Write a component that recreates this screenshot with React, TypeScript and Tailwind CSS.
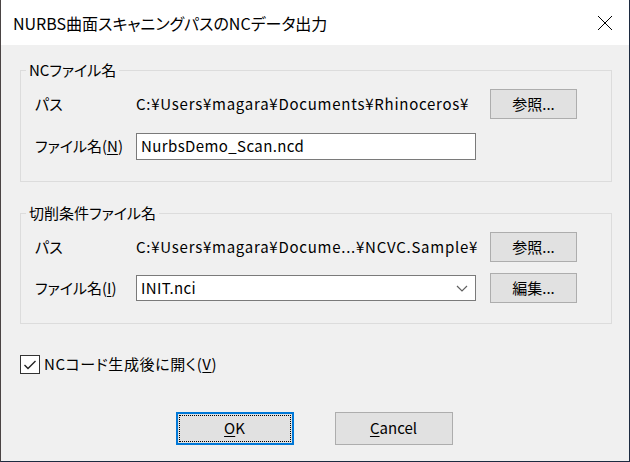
import React from "react"

const jp = "font-['Noto_Sans_CJK_JP','Noto_Sans',sans-serif] [font-feature-settings:'palt']"

function Button({ label, mnemonic, rest, focused, w = "w-[87px]", h = "h-[30px]" }: {
  label?: string
  mnemonic?: string
  rest?: string
  focused?: boolean
  w?: string
  h?: string
}) {
  return (
    <div
      className={`${w} ${h} shrink-0 flex items-center justify-center bg-[#e1e1e1] ${
        focused ? "border-2 border-[#0078d7] p-px" : "border border-[#adadad]"
      }`}
    >
      <div
        className={`w-full h-full flex items-center justify-center ${
          focused ? "border border-dotted border-black" : ""
        }`}
      >
        {label}
        {mnemonic && <span className="underline underline-offset-2">{mnemonic}</span>}
        {rest}
      </div>
    </div>
  )
}

function Group({ title, gap, children }: { title: string; gap: string; children: React.ReactNode }) {
  return (
    <fieldset className="w-[592px] border border-[#dcdcdc] pb-[20px] pt-[9px]">
      <legend className="ml-[5px] px-[3px] leading-[20px]">{title}</legend>
      <div className={`flex flex-col pl-[14px] ${gap}`}>{children}</div>
    </fieldset>
  )
}

function Row({ label, children }: { label: React.ReactNode; children: React.ReactNode }) {
  return (
    <div className="h-[30px] flex items-center">
      <div className="w-[101px] shrink-0">{label}</div>
      {children}
    </div>
  )
}

function Chevron() {
  return (
    <svg width="12" height="7" viewBox="0 0 12 7" className="shrink-0">
      <path d="M1 1 L6 6 L11 1" fill="none" stroke="#606060" strokeWidth="1.2" />
    </svg>
  )
}

export default function App() {
  return (
    <div
      className={`w-[630px] h-[462px] flex flex-col bg-[#f0f0f0] border-l border-r border-b border-l-[#4a4444] border-r-[#1c2a40] border-b-[#1c2a40] text-black text-[15px] ${jp}`}
    >
      {/* title bar */}
      <div className="h-[45px] shrink-0 bg-white flex items-center pl-[12px] pr-[16px]">
        <div className="flex-1 text-[16px] leading-none">NURBS曲面スキャニングパスのNCデータ出力</div>
        <svg width="16" height="16" viewBox="0 0 16 16">
          <path d="M1 1 L15 15 M15 1 L1 15" stroke="#000" strokeWidth="1" />
        </svg>
      </div>

      <div className="flex flex-col pl-[19px] pt-[15px]">
        <Group title="NCファイル名" gap="gap-[12px]">
          <Row label="パス">
            <div className="w-[354px] shrink-0 tracking-[0.75px]">C:¥Users¥magara¥Documents¥Rhinoceros¥</div>
            <Button label="参照..." />
          </Row>
          <Row
            label={
              <>
                ファイル名(<span className="underline underline-offset-2">N</span>)
              </>
            }
          >
            <div className="w-[340px] h-[27px] bg-white border border-[#7a7a7a] flex items-center pl-[4px] tracking-[0.4px]">
              NurbsDemo_Scan.ncd
            </div>
          </Row>
        </Group>

        <div className="h-[21px]" />

        <Group title="切削条件ファイル名" gap="gap-[11px]">
          <Row label="パス">
            <div className="w-[354px] shrink-0 tracking-[0.75px]">C:¥Users¥magara¥Docume...¥NCVC.Sample¥</div>
            <Button label="参照..." />
          </Row>
          <Row
            label={
              <>
                ファイル名(<span className="underline underline-offset-2">I</span>)
              </>
            }
          >
            <div className="w-[340px] h-[26px] shrink-0 bg-white border border-[#7a7a7a] flex items-center pl-[4px] pr-[7px]">
              <span className="flex-1 tracking-[0.4px]">INIT.nci</span>
              <Chevron />
            </div>
            <div className="w-[14px] shrink-0" />
            <Button label="編集..." />
          </Row>
        </Group>

        <div className="h-[31px]" />

        <div className="flex items-center gap-[4px] h-[19px]">
          <div className="w-[20px] h-[19px] bg-white border border-[#333333] flex items-center justify-center">
            <svg width="14" height="12" viewBox="0 0 14 12">
              <path d="M1.5 6 L5 9.5 L12.5 2" fill="none" stroke="#222" strokeWidth="1.4" />
            </svg>
          </div>
          <span className="tracking-[0.6px]">
            NCコード生成後に開く(<span className="underline underline-offset-2">V</span>)
          </span>
        </div>
      </div>

      <div className="flex justify-center gap-[41px] mt-[38px] pr-[2px]">
        <Button mnemonic="O" rest="K" focused w="w-[118px]" h="h-[33px]" />
        <Button mnemonic="C" rest="ancel" w="w-[118px]" h="h-[33px]" />
      </div>
    </div>
  )
}
